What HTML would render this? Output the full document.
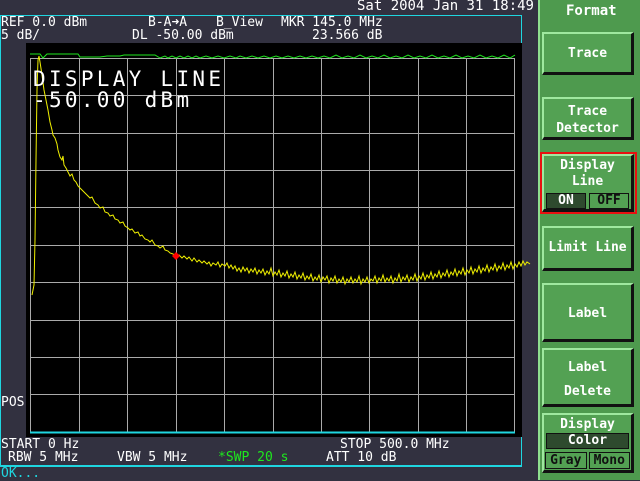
<!DOCTYPE html>
<html><head><style>
body{margin:0;width:640px;height:480px;background:#323140;overflow:hidden;position:relative;font-family:"DejaVu Sans Mono","Liberation Mono",monospace;color:#fff}
.t{position:absolute;font-size:13px;line-height:13px;white-space:pre}
.frame{position:absolute;left:0;top:15px;width:520px;height:449px;border:1px solid #1fd6e0;border-bottom:2px solid #1fd6e0}
.blk{position:absolute;left:26px;top:43px;width:496px;height:394px;background:#000}
.panel{position:absolute;left:538px;top:0;width:102px;height:480px;background:#4e9a4e;border-left:2px solid #8fe08f}
.btn{position:absolute;left:542px;width:92px;background:#53a153;border-top:2px solid #9fe89f;border-left:2px solid #9fe89f;border-right:3px solid #111;border-bottom:3px solid #111;box-sizing:border-box;color:#fff;font-weight:bold;font-size:13px;text-align:center;font-family:"DejaVu Sans Mono","Liberation Mono",monospace}
</style></head><body>
<div class="t" style="right:106px;top:0px;font-size:14px">Sat 2004 Jan 31 18:49</div>
<div class="frame"></div>
<div class="t" style="left:1px;top:16px">REF 0.0 dBm</div>
<div class="t" style="left:148px;top:16px">B-A➜A</div>
<div class="t" style="left:216px;top:16px">B_View</div>
<div class="t" style="left:281px;top:16px">MKR 145.0 MHz</div>
<div class="t" style="left:1px;top:29px">5 dB/</div>
<div class="t" style="left:132px;top:29px">DL -50.00 dBm</div>
<div class="t" style="left:312px;top:29px">23.566 dB</div>
<div class="blk"></div>
<svg style="position:absolute;left:0;top:0" width="540" height="480">
<g stroke="#aaa" stroke-width="1" fill="none">
<path d="M30.5 58V432M79.5 58V432M127.5 58V432M176.5 58V432M224.5 58V432M273.5 58V432M321.5 58V432M369.5 58V432M418.5 58V432M466.5 58V432M514.5 58V432"/>
<path d="M30 58.5H515M30 95.5H515M30 133.5H515M30 170.5H515M30 207.5H515M30 245.5H515M30 282.5H515M30 320.5H515M30 357.5H515M30 394.5H515"/>
</g>
<path d="M30 432.5H515" stroke="#1fd6e0" stroke-width="2"/>
<path d="M30 54H40L43 58L47 54H78L80 57H100L107 56H120L124 55H155L160 58L165 56L168 58L172 56L176 58L180 56L184 58L188 56L192 58L196 56L200 58L206 56L212 58L218 56L224 58L230 56L236 58L240 56L246 58L252 56L258 58L264 56L270 58L276 56L282 58L288 56L294 58L300 56L306 58L312 56L318 58L324 56L330 58L336 55L342 58L348 56L354 58L360 55L366 58L372 56L378 58L384 55L390 58L396 56L402 58L408 55L414 58L420 56L426 58L432 55L438 58L444 56L450 58L456 55L462 58L468 56L474 58L480 55L486 58L492 56L498 58L504 55L510 58L515 55" stroke="#1ee81e" fill="none" stroke-width="1"/>
<polyline fill="none" stroke="#f0f000" stroke-width="1" points="32,295 34,285 35,240 36,160 37,90 38,60 39,56 40,62 42,75 44,90 46,100 48,110 50,122 52,130 53,135 55,138 57,144 58,150 60,157 62,160 63,156 64,165 66,168 68,172 70,176 72,174 74,180 76,182 78,186 80,188 82,190 84,192 86,194 88,196 90,198 92,197 95,203 98,205 100,208 103,207 105,212 108,213 110,216 113,215 115,219 118,220 120,223 123,222 125,226 128,228 130,230 132,229 135,233 138,232 140,236 142,235 145,239 148,240 150,242 152,240 155,245 158,246 160,248 163,246 165,250 168,251 170,253 173,254 176,256 179,255 182,258 184,256 187,259 189,257 192,261 194,258 197,262 199,260 202,263 204,261 207,264 209,262 211,266 213,263 216,265 218,262 220,267 222,264 225,266 227,263 229,268 231,265 233,269 235,266 237,271 239,268 241,272 243,267 245,271 247,268 249,273 251,269 253,272 255,268 257,274 259,270 261,273 263,269 265,275 267,271 269,274 271,268 273,276 275,272 277,275 279,270 281,277 283,273 285,276 287,271 289,278 291,274 293,277 295,272 297,279 299,275 301,278 303,273 305,280 307,276 309,279 311,274 313,281 315,277 317,280 319,275 321,282 323,277 325,280 327,276 329,283 331,278 333,281 335,276 337,283 339,279 341,282 343,277 345,284 347,279 349,282 351,277 353,283 355,279 357,282 359,276 361,284 363,279 365,282 367,277 369,283 371,279 373,281 375,276 377,283 379,278 381,281 383,275 385,282 387,278 389,281 391,276 393,283 395,278 397,281 399,274 401,282 403,277 405,280 407,275 409,282 411,277 413,280 415,274 417,281 419,276 421,279 423,273 425,280 427,275 429,278 431,272 433,279 435,274 437,277 439,271 441,278 443,273 445,276 447,270 449,277 451,272 453,275 455,269 457,276 459,271 461,274 463,268 465,275 467,270 469,273 471,267 473,274 475,269 477,272 479,266 481,273 483,268 485,271 487,265 489,272 491,267 493,270 495,264 497,271 499,266 501,269 503,263 505,270 507,265 509,268 511,262 513,269 515,264 517,267 519,262 521,266 523,261 525,265 527,262 530,264"/>
<path d="M176 252L180 256L176 260L172 256Z" fill="#f00"/>
</svg>
<div class="t" style="left:33px;top:69px;font-size:21px;line-height:21px;letter-spacing:3.3px">DISPLAY LINE</div>
<div class="t" style="left:33px;top:90px;font-size:21px;line-height:21px;letter-spacing:3.3px">-50.00 dBm</div>
<div class="t" style="left:1px;top:396px">POS</div>
<div class="t" style="left:1px;top:438px">START 0 Hz</div>
<div class="t" style="left:340px;top:438px">STOP 500.0 MHz</div>
<div class="t" style="left:8px;top:451px">RBW 5 MHz</div>
<div class="t" style="left:117px;top:451px">VBW 5 MHz</div>
<div class="t" style="left:218px;top:451px;color:#1ee81e">*SWP 20 s</div>
<div class="t" style="left:326px;top:451px">ATT 10 dB</div>
<div class="t" style="left:1px;top:467px;color:#1fd6e0">OK...</div>
<div class="panel"></div>
<div class="t" style="left:566px;top:5px;font-size:14px;font-weight:bold">Format</div>
<div class="btn" style="top:32px;height:43px;line-height:40px">Trace</div>
<div class="btn" style="top:97px;height:43px;line-height:17px;padding-top:4px">Trace<br>Detector</div>
<div style="position:absolute;left:540px;top:152px;width:97px;height:62px;border:2px solid #e81010;box-sizing:border-box"></div>
<div class="btn" style="top:154px;height:58px;line-height:16px;padding-top:2px">Display<br>Line
<div style="display:flex;gap:3px;margin:3px 2px 0 2px"><span style="flex:1;background:#2e4a2e;color:#fff;border:1px solid #111;line-height:14px">ON</span><span style="flex:1;background:#53a153;color:#111;border:1px solid #111;line-height:14px">OFF</span></div></div>
<div class="btn" style="top:226px;height:45px;line-height:40px">Limit Line</div>
<div class="btn" style="top:283px;height:59px;line-height:58px">Label</div>
<div class="btn" style="top:348px;height:59px;line-height:24px;padding-top:6px">Label<br>Delete</div>
<div class="btn" style="top:413px;height:60px;line-height:17px;padding-top:1px">Display
<div style="margin:0 2px;background:#2e4a2e;border:1px solid #111;line-height:14px">Color</div>
<div style="display:flex;gap:2px;margin:3px 1px 0 1px"><span style="flex:1;color:#111;border:1px solid #111;line-height:15px">Gray</span><span style="flex:1;color:#111;border:1px solid #111;line-height:15px">Mono</span></div></div>
</body></html>
